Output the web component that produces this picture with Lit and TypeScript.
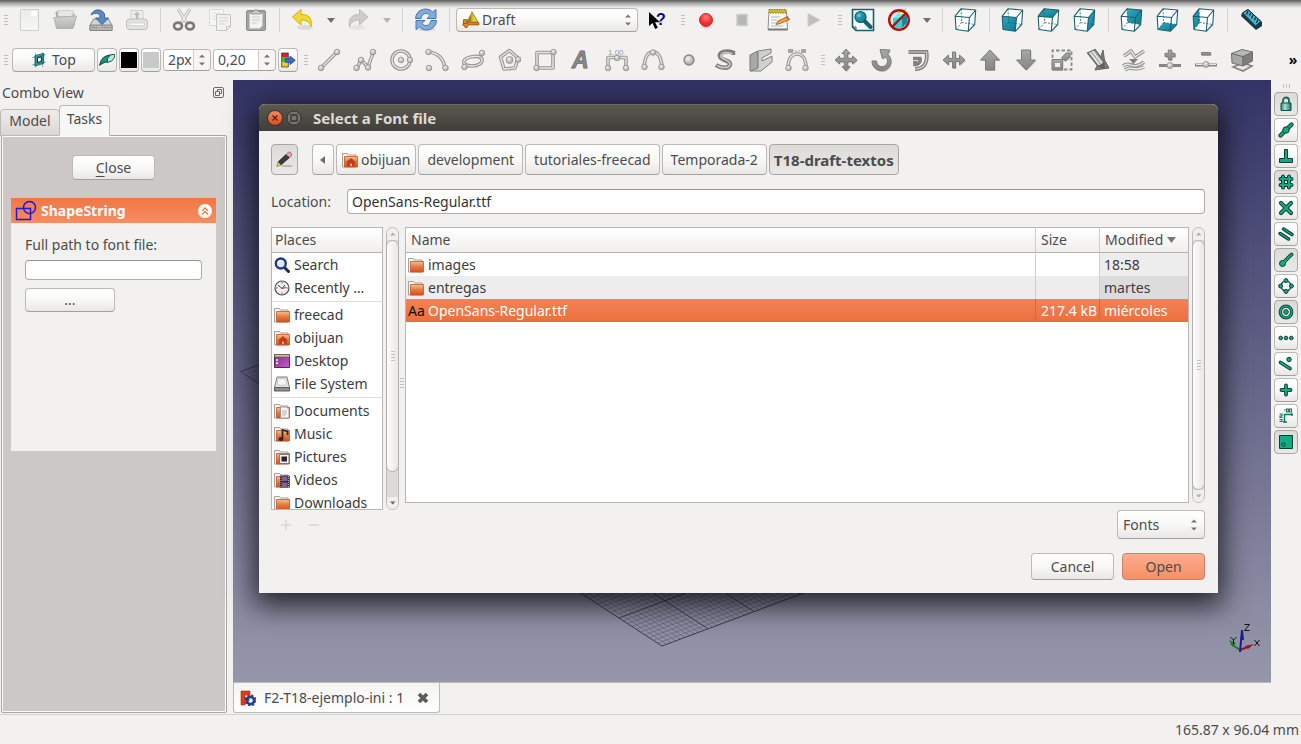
import { LitElement, html, svg, css, nothing, TemplateResult } from "lit";
import { customElement, state } from "lit/decorators.js";
import { classMap } from "lit/directives/class-map.js";

type Art = TemplateResult;

const icon = (art: Art, size = 24, box = 24) =>
  html`<svg class="icon" width=${size} height=${size} viewBox="0 0 ${box} ${box}" aria-hidden="true">${art}</svg>`;

/* Disabled drawing tools: a grey outline with a light core, and small spheres on the nodes. */
const tube = (d: string) => svg`
  <path d=${d} fill="none" stroke="#959593" stroke-width="3.6" stroke-linejoin="round"/>
  <path d=${d} fill="none" stroke="#e6e6e4" stroke-width="1.4" stroke-linejoin="round"/>`;
const ball = (x: number, y: number, r = 2.8) =>
  svg`<circle cx=${x} cy=${y} r=${r} fill="url(#ball)" stroke="#8f8f8d" stroke-width=".8"/>`;
const solid = (d: string) => svg`
  <path d=${d} transform="translate(1 1)" fill="#c4c4c2"/>
  <path d=${d} fill="url(#steel)" stroke="#7c7c7a" stroke-width="1" stroke-linejoin="round"/>`;

const FACES: Record<string, string> = {
  none: "",
  front: "M1.2 8.2 15.5 9.5 14.2 23.3 2 21.5Z",
  top: "M7 .8 21.7 2 15.5 9.5 1.2 8.2Z",
  right: "M21.7 2 15.5 9.5 14.2 23.3 20.7 16.5Z",
  rear: "M7 .8 21.7 2 20.7 16.5 7.7 14.5Z",
  bottom: "M2 21.5 14.2 23.3 20.7 16.5 7.7 14.5Z",
  left: "M7 .8 1.2 8.2 2 21.5 7.7 14.5Z",
};
const cube = (face: string) => svg`
  <path d="M1.2 8.2 7 .8 21.7 2 20.7 16.5 14.2 23.3 2 21.5Z" fill="#fdfefe"/>
  <path d=${FACES[face]} fill="url(#teal)"/>
  <path d="M1.2 8.2 15.5 9.5 14.2 23.3 2 21.5ZM1.2 8.2 7 .8 21.7 2 15.5 9.5M21.7 2 20.7 16.5 14.2 23.3" fill="none" stroke="#1f5f6c" stroke-width="1.1" stroke-linejoin="round"/>
  <path d="M7 .8 7.7 14.5 20.7 16.5M7.7 14.5 2 21.5" fill="none" stroke="#1f5f6c" stroke-width=".8" stroke-dasharray="2 1.4"/>`;

const ART: Record<string, Art> = {
  new: svg`<path d="M3.5 1.5h18v21h-18z" fill="url(#paper)" stroke="#cfcfcd"/><circle cx="17" cy="5.500" r="3" fill="#fff"/>`,
  open: svg`<path d="M3 4h8l2 2h8v12H5z" fill="#b9b9b7" stroke="#a3a3a1"/><path d="M5 2.500h15v6H5z" fill="#e6e6e4" stroke="#bcbcba" stroke-width=".6"/><path d="M.8 9.500 23.500 8 20 20.500H3.500z" fill="url(#folderGrey)" stroke="#a9a9a7" stroke-width=".8"/>`,
  save: svg`<path d="M4.500 11h15l3.500 6v5.500H1V17z" fill="#d3d4d2" stroke="#8f908e"/><path d="M1 17h22v5.500H1z" fill="#b3b5b2" stroke="#7d7f7c" stroke-width=".8"/><path d="M3 19.500h6M13 19.500h8" stroke="#7a7c79" stroke-dasharray="1 1"/><path d="M2 7C4 .5 13 .2 15.500 6v4h4L13 16.500 6.500 10h4.300V7.500C9 4.500 6 4.500 2 7z" fill="#5a8ac0" stroke="#356aa5"/>`,
  print: svg`<path d="M6 2.500h12V12H6z" fill="#eeeeec" stroke="#cfcfcd"/><path d="M12 3.500 15.500 7H13.200v4h-2.400V7H8.500z" fill="#bcbcba"/><rect x="1.500" y="11" width="21" height="10.500" rx="3" fill="#e2e2e0" stroke="#bcbcba"/><path d="M4.500 15h15v2.500h-15z" fill="#fbfbfb" stroke="#c6c6c4" stroke-width=".6"/>`,
  cut: svg`<path d="M6 1 15.500 16M18 1 8.500 16" stroke="#a9a9a7" stroke-width="3"/><path d="M6 1 15 15M18 1 9 15" stroke="#efefed" stroke-width="1.4"/><ellipse cx="6" cy="18" rx="4" ry="3.400" fill="none" stroke="#7b7b79" stroke-width="2.600"/><ellipse cx="18" cy="18" rx="4" ry="3.400" fill="none" stroke="#7b7b79" stroke-width="2.600"/>`,
  copy: svg`<path d="M1.500 1.500h14v16h-14z" fill="#f6f6f5" stroke="#d8d8d6"/><path d="M4 5h9M4 8h5M4 11h4" stroke="#dededc"/><path d="M8.500 6.500h14v12l-4 4h-10z" fill="#f1f1ef" stroke="#c4c4c2"/><path d="M11 10h9M11 13h9M11 16h6" stroke="#d5d5d3"/><path d="M18.500 22.500v-4h4z" fill="#fff" stroke="#c4c4c2"/>`,
  paste: svg`<rect x="2.500" y="2.500" width="19" height="20" rx="1.500" fill="#a3a3a1" stroke="#8c8c8a"/><path d="M5.500 5.500h13v12l-3 3h-10z" fill="#f3f3f1" stroke="#c6c6c4"/><path d="M8 9h8M8 12h8M8 15h5" stroke="#c9c9c7"/><path d="M7 3.500h2.500q2.500-4 5 0H17V6H7z" fill="#c9c9c7" stroke="#8c8c8a" stroke-width=".8"/>`,
  undo: svg`<ellipse cx="14" cy="19.500" rx="8" ry="2.500" fill="#dcdcda"/><path d="M10 1.500v5c7-.3 11.500 3 10 12-1.500-5-5-6.500-10-6.500v5L1.500 9z" fill="#f3d936" stroke="#d7ad05" stroke-linejoin="round"/>`,
  redo: svg`<ellipse cx="10" cy="19.500" rx="8" ry="2.500" fill="#e4e4e2"/><path d="M12.500 1.500v5C5.500 6.200 1 10 2.500 19c1.500-5 4.500-7 10-7v5L21 9z" fill="#cdcdcb" stroke="#bcbcba" stroke-linejoin="round"/>`,
  refresh: svg`<ellipse cx="12" cy="21.500" rx="10" ry="1.800" fill="#dcdcda"/><path d="M1.500 10.500C2 .5 14-1.500 18.500 4L22 1.500v9H13l3-3c-3-3.500-8-2.500-9 3z" fill="#81abdb" stroke="#4577b4" stroke-linejoin="round"/><path d="M22.500 12.500c-.5 10-12.500 12-17 6.500L2 21.500v-9h9l-3 3c3 3.500 8 2.500 9-3z" fill="#81abdb" stroke="#4577b4" stroke-linejoin="round"/>`,
  draft: svg`<path d="M12 3v12H6z" fill="#a37a2a"/><path d="M13 1 21.500 15H13z" fill="#e8cf2b" stroke="#7d6a12"/><path d="M2 15.500h20.500v3H8l-1 3.500H4l-1-3H1z" fill="#e58a1d" stroke="#8a4a05"/><path d="M2 11.500h5v5H2z" fill="#e58a1d" stroke="#8a4a05"/>`,
  whats: svg`<path d="M4 4v14l3.500-3 2.700 6 2.600-1.200-2.700-5.600H15z" fill="#000"/><text x="11" y="17" font-family="Liberation Sans" font-weight="bold" font-size="16" fill="#0a0a80">?</text>`,
  record: svg`<ellipse cx="12" cy="19" rx="6" ry="1.500" fill="#dcdcda"/><circle cx="12" cy="12" r="6.500" fill="url(#rec)" stroke="#d92626"/>`,
  stop: svg`<path d="M7 6.500h10v11H7z" fill="#b6b6b4" stroke="#cdcdcb" stroke-width="1.600"/>`,
  macro: svg`<path d="M3 3.500h17.500l1 18H2z" fill="#f8f8f6" stroke="#8f8f8d"/><path d="M2 21.500h19.500" stroke="#777" stroke-width="2"/><path d="M3 1.500h17v3.500H3z" fill="#cdb434" stroke="#8f7a10" stroke-dasharray="1.500 1"/><path d="M5 9h9M5 12h6M5 15h5M5 18h12" stroke="#b7b7b5"/><path d="M10 16.500 12 13l9.500-4.500 2 3-9.500 4z" fill="#f0a63c" stroke="#8d5a12" stroke-width=".8"/><path d="m20 9.200 1.500-.7 2 3-1.500.6z" fill="#d95b4a"/>`,
  play: svg`<path d="M6 5.500 18 12 6 18.500z" fill="#bebebc" stroke="#cdcdcb"/>`,
  fit: svg`<path d="M1.500 1.500h21v21H5l-3.500-3.500z" fill="#f6fbfc" stroke="#1b5c69" stroke-width="1.600"/><path d="M1.500 19H5v3.500" fill="none" stroke="#1b5c69"/><path d="m13.500 13 6 6" stroke="#14606f" stroke-width="4" stroke-linecap="round"/><circle cx="9.500" cy="9" r="5.500" fill="url(#teal)" stroke="#115464" stroke-width="1.200"/><circle cx="8" cy="7.500" r="2" fill="#7fd0dd" opacity=".7"/>`,
  nodraw: svg`<path d="M6 10h9v10H6z" fill="#35d0d8"/><path d="m15 10 5-4v9l-5 5z" fill="#128b95"/><path d="m6 10 4-4h10l-5 4z" fill="#7fe8ec"/><path d="M10 6 19 1" stroke="#e9cd3a" stroke-width="1.500"/><circle cx="12" cy="12" r="9.800" fill="none" stroke="#b01212" stroke-width="2.400"/><path d="M19 5 5 19" stroke="#b01212" stroke-width="2.400"/>`,
  ruler: svg`<path d="m3 5 6-4 14 13v4l-6 4L2 8z" fill="#173b47"/><path d="M3.500 5 9 1.500 22 13.500 16.500 18z" fill="#4aaecb" stroke="#123"/><path d="m9 3-1.500 3.500M11.500 5 10.500 7.500M14 7l-1.500 3.500M16.500 9.500l-1 2.500M19 11.500 17.500 15" stroke="#0d2a33" stroke-width="1.200"/>`,

  plane: svg`<path d="M6 5.500 19 2v15L6 21z" fill="#3fb9c4" stroke="#0f5a63" stroke-width="1.300"/><path d="M9.500 9 15.500 7v7L9.500 16z" fill="#fff" stroke="#111" stroke-width="1.500"/><path d="M2 8.500 22 4M2 19.500 22 15M7 2v21M17.500 1v21" stroke="#10606a" stroke-width=".9"/>`,
  pen: svg`<path d="M1 19.500C2 13 7 7 14 5l5-.5L18 10l-5 5-5 .5z" fill="#15957a" stroke="#0b4f42" stroke-width="1.600"/><path d="m13 9 5-5 5-.5.500 4.500-5 6-6 1.500z" fill="#bfe6dc" stroke="#0b4f42" stroke-width="1.400"/>`,
  apply: svg`<path d="M2.500 1.500h10v7h-10z" fill="#e3202a"/><path d="M2.500 8.500h6v7h-6z" fill="#31c52c"/><path d="M2.500 15.500h10v7h-10z" fill="#e9cf22"/><path d="M2.500 1.500h10v21h-10z" fill="none" stroke="#222"/><path d="M8 9.500h7V6l8 6.500-8 6.500v-3.500H8z" fill="#356ad0" stroke="#123a85"/>`,

  line: svg`${tube("M4 20 20 4")}${ball(4, 20)}${ball(20, 4)}`,
  wire: svg`${tube("M4 20 8 12 15 19 20 5")}${ball(3.500, 20)}${ball(8, 12)}${ball(15, 19.500)}${ball(20, 4)}`,
  circle: svg`${tube("M21 12A9 9 0 1 1 3 12 9 9 0 0 1 21 12")}${ball(12, 12)}${ball(21, 12)}`,
  arc: svg`${tube("M4 4Q18 6 20 20")}${ball(3.500, 4)}${ball(20.500, 20)}${ball(4, 20)}`,
  ellipse: svg`${tube("M21 11C22 15 17 18 11 18S2 16 3 13 8 9 13 8.500 20 9 21 11")}${ball(3.500, 19)}${ball(21, 5)}`,
  polygon: svg`${tube("M12.500 2.500 21 10 18 20 7 21 3.500 9Z")}${ball(12.500, 12, 3.500)}${ball(21.200, 11.500)}`,
  rect: svg`${tube("M4 4.500H20V20H4Z")}${ball(3.500, 20)}${ball(20.500, 4)}`,
  text: svg`<text x="3" y="20" font-family="Liberation Sans" font-weight="bold" font-style="italic" font-size="23" fill="#8a8a88" stroke="#6f6f6d" stroke-width=".9">A</text>`,
  dim: svg`<text x="3" y="7" font-family="Liberation Sans" font-size="8" fill="#9a9a98">1.00</text>${tube("M3 20V9.500H21V20")}${ball(3, 20)}${ball(21, 20)}${ball(12, 10)}`,
  bspline: svg`${tube("M3 19C4 8 8 4 12 4S20 8 21 19")}${ball(3.500, 19)}${ball(12, 4.500)}${ball(20.500, 19)}`,
  point: svg`<circle cx="12" cy="12" r="5" fill="url(#ball)" stroke="#858583" stroke-width="1.300"/>`,
  shape: svg`<path d="M20 7V4.500C13 2 6 4 7 8.500S18 12 17 16.500 8 20.500 3 17" fill="none" stroke="#7c7c7a" stroke-width="4.400"/><path d="M19.500 6C13 3 7 5 8 8.500S18 12 17 16.500 8 20 4 17.500" fill="none" stroke="#c9c9c7" stroke-width="1.600"/>`,
  binder: svg`<path d="M1 7 9 3v18l-8 2z" fill="#a9a9a7" stroke="#777"/><path d="M9 3 22 1v4l-9 5v3l10-5v6l-11 9H2l7-3z" fill="#cfcfcd" stroke="#80807e"/>`,
  bezier: svg`${tube("M3 20C3 9 8 6 12 6S21 9 21 20")}<path d="M4 3H20" stroke="#a3a3a1" stroke-dasharray="2 1"/><path d="M3 1h5v4H3zM16 1h5v4h-5z" fill="#a5a5a3"/>${ball(3.500, 20)}${ball(20.500, 20)}`,

  move: svg`${solid("M12 1 16 5.500H13.700V10.300H18.500V8L23 12 18.500 16V13.700H13.700V18.500H16L12 23 8 18.500H10.300V13.700H5.500V16L1 12 5.500 8V10.300H10.300V5.500H8Z")}`,
  rotate: svg`${solid("M2 13A9.500 9.500 0 1 0 17.500 6L20 2 10 1.500 12.500 11 15 8.500A5.500 5.500 0 1 1 6.500 13Z")}`,
  offset: svg`<path d="M2.500 4H20.500C22 15 18 21 9 21" fill="none" stroke="#80807e" stroke-width="3.800"/><path d="M2.500 4H20.500C22 15 18 21 9 21" fill="none" stroke="#cfcfcd" stroke-width="1.200"/><path d="M7 10.500H14C15 14 12 16.500 9 16.500V13" fill="none" stroke="#80807e" stroke-width="3.600"/>`,
  trim: svg`${solid("M1 12 6.500 7V10.500H10.500V4H13.500V10.500H17.500V7L23 12 17.500 17V13.500H13.500V20H10.500V13.500H6.500V17Z")}`,
  up: svg`${solid("M12 2 21.500 12H16.500V22H7.500V12H2.500Z")}`,
  down: svg`${solid("M12 22 21.500 12H16.500V2H7.500V12H2.500Z")}`,
  scale: svg`<path d="M2.500 10V2.500H21.500V21.500H14" fill="none" stroke="#8a8a88" stroke-width="1.800" stroke-dasharray="3.500 2"/>${solid("M2 11.500H12.500V22H2Z")}<path d="M5 15h5v4H5z" fill="#eee"/>${solid("M11.500 10 16 5H20V9L15 13Z")}`,
  edit: svg`<path d="M17 2 18.500 12 23 20 9 22 13 14z" fill="#7d7d7b" stroke="#636361"/><path d="M1.500 5 9 1.500 18 13.500V20L11 17z" fill="#a6a6a4" stroke="#666664" stroke-width="1.300"/><path d="m4 4.500 9.500 12.500M6.500 3 16 15.500" stroke="#eeeeec" stroke-width="1.300"/><path d="m12 18.500 6-4.500.5 7z" fill="#5f5f5d"/>`,
  wire2: svg`${tube("M2 8 9 3 13 9 22 3")}${tube("M1 18C7 12 11 23 22 14M3 22C9 17 12 24 22 19")}<path d="M7 11h9l-4.500 5z" fill="#80807e"/>`,
  addpt: svg`${solid("M10.300 2H13.700V5.300H17V8.700H13.700V12H10.300V8.700H7V5.300H10.300Z")}<path d="M1 17.500H23" stroke="#858583" stroke-width="3"/>${ball(12, 17.500, 3)}`,
  delpt: svg`${solid("M7.500 4.500H16.500V7H7.500Z")}<path d="M1 17H23" stroke="#858583" stroke-width="3"/><path d="M2 16.500H22" stroke="#e8e8e6"/>${ball(12, 16.500, 3)}`,
  view2d: svg`<path d="M3 19 13 15l9 3-9 5z" fill="#e6e6e4" stroke="#858583" stroke-width="1.600"/><path d="M1.500 5.500 13 8.500V18L2 15z" fill="#a8a8a6" stroke="#6e6e6c"/><path d="M13 8.500 22.500 4v9L13 18z" fill="#7e7e7c" stroke="#6e6e6c"/><path d="M1.500 5.500 12 1.500 22.500 4 13 8.500z" fill="#b9b9b7" stroke="#6e6e6c"/>`,

  iso: cube("none"), front: cube("front"), top: cube("top"), right: cube("right"),
  rear: cube("rear"), bottom: cube("bottom"), left: cube("left"),
};

/* Snap tools, 16 x 16: green shapes with a dark outline. */
const snapStroke = (d: string, w = 2.200) => svg`
  <path d=${d} fill="none" stroke="#0d3f38" stroke-width=${w + 2} stroke-linecap="round"/>
  <path d=${d} fill="none" stroke="#14ab83" stroke-width=${w} stroke-linecap="round"/>`;
const dot = (x: number, y: number, r: number) =>
  svg`<circle cx=${x} cy=${y} r=${r} fill="#14ab83" stroke="#0d3f38"/>`;

const SNAPS: { name: string; on?: boolean; art: Art }[] = [
  { name: "Toggle snap", on: true, art: svg`<path d="M5 7V4.500a3 3 0 0 1 6 0V7" fill="none" stroke="#14695b" stroke-width="1.800"/><path d="M3 7h10v7.500H3z" fill="url(#lock)" stroke="#0d5247"/>` },
  { name: "Midpoint", art: svg`${snapStroke("M2.500 13.500 13.500 2.500")}${dot(8, 8, 3.200)}<path d="m6 10 4-4" stroke="#14ab83" stroke-width="2"/>` },
  { name: "Perpendicular", art: svg`<path d="M6.500 1.500h3v9h5v4h-13v-4h5z" fill="#14ab83" stroke="#0d3f38"/>` },
  { name: "Grid", on: true, art: svg`${snapStroke("M5 2.500V13.500M11 2.500V13.500M2.500 5H13.500M2.500 11H13.500", 2)}` },
  { name: "Intersection", art: svg`${snapStroke("M3 3 13 13M13 3 3 13")}` },
  { name: "Parallel", art: svg`${snapStroke("M5.500 3 14 8.500M2 7.500 10.500 13", 1.400)}` },
  { name: "Endpoint", on: true, art: svg`${snapStroke("M5 11 13.500 2.500", 1.800)}${dot(4.500, 11.500, 3)}<path d="m5 11 3-3" stroke="#14ab83" stroke-width="1.800"/>` },
  { name: "Angle", art: svg`<circle cx="8" cy="8" r="5" fill="none" stroke="#0d3f38" stroke-width="1.200"/>${dot(8, 2.600, 2)}${dot(8, 13.400, 2)}${dot(2.600, 8, 2)}${dot(13.400, 8, 2)}` },
  { name: "Center", on: true, art: svg`<circle cx="8" cy="8" r="5.800" fill="none" stroke="#0d3f38" stroke-width="3.200"/><circle cx="8" cy="8" r="5.800" fill="none" stroke="#14ab83" stroke-width="1.400"/>${dot(8, 8, 2.300)}` },
  { name: "Extension", art: svg`${dot(2.700, 8, 1.800)}${dot(8, 8, 1.800)}${dot(13.300, 8, 1.800)}` },
  { name: "Near", art: svg`${snapStroke("M2.500 6.500 12 12.500", 1.600)}${dot(11, 3.500, 2.200)}` },
  { name: "Ortho", art: svg`${snapStroke("M8 3.500V12.500M3.500 8H12.500", 1.800)}` },
  { name: "Dimensions", art: svg`<path d="M6.500 14V6.500H14M6.500 6.500v2M14 5v3M5 14h4" fill="none" stroke="#15705f" stroke-width="1.400"/><path d="M6 2h1.500M8.500 1v3h1.800V1zM11.500 1v3h2V1zM1.500 6h2.500v2H2v1.500h2.500M1.500 11.500H4v2H1.500" fill="none" stroke="#15705f" stroke-width="1.100"/>` },
  { name: "Working plane", on: true, art: svg`<path d="M1.500 1.500h13v13h-13z" fill="#14ab83" stroke="#0d3f38"/><circle cx="5.500" cy="10.500" r="1.700" fill="none" stroke="#0d3f38"/>` },
];

const folder = (over: Art | typeof nothing = nothing) => svg`
  <path d="M.5 15V1.500h5l1 1.500h7.500V15z" fill="#f4f3f1" stroke="#a5a19b"/>
  <path d="M2.500 4.500h13v10.500H2.500z" fill="url(#orange)" stroke="#c4532a" stroke-width=".8"/>${over}`;

const PLACE_ART: Record<string, Art> = {
  folder: folder(),
  home: folder(svg`<path d="m9 6 5 4.500h-1.200V14H5.200v-3.500H4z" fill="#c23b17"/><path d="M8 11.500h2V14H8z" fill="#f3b58e"/>`),
  search: svg`<path d="m11 11 3.500 3.500" stroke="#2c2c34" stroke-width="3" stroke-linecap="round"/><circle cx="6.800" cy="6.500" r="5" fill="#dbe9f9" stroke="#23397f" stroke-width="2.400"/><path d="M4 6a3 3 0 0 1 3-2.500" stroke="#fff" stroke-width="1.200" fill="none"/>`,
  recent: svg`<circle cx="8" cy="8" r="7" fill="#f1f1ef" stroke="#4d4d4b" stroke-width="1.200"/><path d="M8 8.500 4 5M8 8.500 11 5" stroke="#444"/><path d="m8 8.500 4-1" stroke="#d02020"/><path d="M8 2v1.500M8 12.500V14M2 8h1.500M12.500 8H14" stroke="#666"/>`,
  desktop: svg`<path d="M.5 1.500h15v13H.5z" fill="url(#purple)" stroke="#4f2a52"/><path d="M.5 1.500h15v2.500H.5z" fill="#c8c39e" stroke="#66614b" stroke-width=".7"/><path d="M2 6h2v2H2zM2 9h2v2H2z" fill="#e8c6ea"/>`,
  disk: svg`<path d="m3 1 10 0 2.500 10.500H.5z" fill="#e3e3e1" stroke="#7b7b79"/><ellipse cx="8" cy="6" rx="4.500" ry="3.500" fill="#f6f6f4" stroke="#b3b3b1" stroke-width=".7"/><path d="M.5 11.500h15v3.500H.5z" fill="#8f8f8d" stroke="#5c5c5a"/>`,
  docs: folder(svg`<path d="M6.500 4h6l2.500 2.500V15H6.500z" fill="#f6f5f2" stroke="#8f8b85" stroke-width=".8"/><path d="M8 8h5M8 10h5M8 12h4" stroke="#a8a49e" stroke-width=".8"/>`),
  music: folder(svg`<path d="M8.500 12.500V4l5 1.500V9" fill="none" stroke="#2e2c2a" stroke-width="1.800"/><ellipse cx="7" cy="13" rx="2.500" ry="2" fill="#2e2c2a"/>`),
  pics: folder(svg`<path d="M5.500 5.500h9.500v9H5.500z" fill="#f2f1ef" stroke="#6b6762" stroke-width=".8"/><path d="M7.500 7.500h5.500v5H7.500z" fill="#2b2038"/>`),
  video: folder(svg`<path d="M6 3.500h9.500v12H6z" fill="#2c2a2a"/><path d="M8 4.500h5.500v4.500H8zM8 10.500h5.500v4.500H8z" fill="#8a5c98"/><path d="M7 4v11M14.500 4v11" stroke="#d5d2cc" stroke-width=".8" stroke-dasharray="1 1"/>`),
};

const PLACES: [string, string][][] = [
  [["search", "Search"], ["recent", "Recently …"]],
  [["folder", "freecad"], ["home", "obijuan"], ["desktop", "Desktop"], ["disk", "File System"]],
  [["docs", "Documents"], ["music", "Music"], ["pics", "Pictures"], ["video", "Videos"], ["folder", "Downloads"]],
];

const FILES = [
  { name: "images", size: "", modified: "18:58" },
  { name: "entregas", size: "", modified: "martes" },
  { name: "OpenSans-Regular.ttf", size: "217.4 kB", modified: "miércoles" },
];

const CRUMBS = ["obijuan", "development", "tutoriales-freecad", "Temporada-2", "T18-draft-textos"];

@customElement("app-root")
export class AppRoot extends LitElement {
  @state() private selected = 2;
  @state() private location = "OpenSans-Regular.ttf";

  static styles = css`
    :host {
      display: flex; flex-direction: column; height: 100vh; overflow: hidden; position: relative;
      background: #f2f1f0; color: #4c4c4c;
      font: 14px/20px "Noto Sans", "Open Sans", sans-serif;
    }
    * { box-sizing: border-box; }
    button, input, select { font: inherit; color: inherit; margin: 0; padding: 0; }
    button { display: inline-flex; align-items: center; justify-content: center; border: 0; background: none; white-space: nowrap; }
    .icon { display: block; flex: none; }
    .defs { position: absolute; }
    .fade { position: absolute; inset: 0 0 auto; height: 8px; background: linear-gradient(#5e5e5e, #b4b4b3 50%, rgba(242, 241, 240, 0)); pointer-events: none; }

    .bar { display: flex; align-items: center; height: 40px; gap: 2px; }
    .group { display: flex; align-items: center; }
    .grip { width: 11px; display: flex; flex-direction: column; align-items: center; gap: 2px; }
    .grip i { width: 4px; height: 1px; background: #c3c0bc; }
    .grip.flat { flex-direction: row; width: auto; height: 8px; justify-content: center; }
    .grip.flat i { width: 1px; height: 4px; }
    .tool { width: 36px; height: 32px; }
    .drop { width: 20px; height: 32px; }
    .sep { width: 11px; height: 24px; display: flex; justify-content: center; }
    .sep::before { content: ""; width: 1px; background: #d6d3d0; }

    .raised { border: 1px solid #bdb9b4; border-bottom-color: #a39f99; border-radius: 4px; background: linear-gradient(#fff, #f8f8f7 50%, #e9e8e6); }
    .pressed { background: linear-gradient(#dddbd8, #e9e8e6); border-color: #aaa6a1; }
    .settings { gap: 2px; padding-left: 1px; }
    .plane { width: 83px; height: 24px; gap: 5px; }
    .small { width: 20px; height: 24px; }
    .swatch { width: 16px; height: 16px; background: #c8c9ca; }
    .swatch.black { background: #000; }
    .spin { display: flex; height: 22px; width: 48px; overflow: hidden; background: #f6f5f4; }
    .spin.wide { width: 63px; }
    .spin input { flex: 1; min-width: 0; border: 0; border-right: 1px solid #cfccc8; background: #fff; padding-left: 4px; outline: 0; }
    .steps { width: 16px; flex: none; display: flex; align-items: center; justify-content: center; }
    .more { margin-left: auto; width: 16px; font-weight: bold; color: #000; }
    .combo { display: flex; align-items: center; }
    .combo select { appearance: none; border: 0; background: none; flex: 1; min-width: 0; outline: 0; height: 100%; }
    .bench { width: 182px; height: 24px; margin: 0 1px; padding: 0 5px; gap: 2px; }

    .main { flex: 1; min-height: 0; display: flex; }
    .dock { width: 233px; flex: none; display: flex; flex-direction: column; padding-right: 6px; }
    .docktitle { display: flex; align-items: center; justify-content: space-between; height: 25px; padding: 0 3px 0 2px; }
    .tabs { display: flex; align-items: flex-end; height: 31px; margin-bottom: -1px; z-index: 1; }
    .tab { height: 27px; width: 60px; border: 1px solid #bdb9b4; border-radius: 4px 4px 0 0; background: linear-gradient(#eeedeb, #dad8d5); margin-right: -1px; padding-bottom: 3px; }
    .tab.open { height: 31px; width: 51px; background: #f7f7f6; border-bottom-color: #f7f7f6; }
    .panel { flex: 1; background: #cbc8c5; border: 1px solid #aaa6a1; outline: 1px solid #fafafa; outline-offset: -2px; margin: 0 0 1px 1px; border-radius: 2px; padding: 19px 10px 0 9px; display: flex; flex-direction: column; }
    .close { align-self: center; width: 83px; height: 25px; }
    .close u { text-underline-offset: 3px; }
    .task { margin-top: 18px; background: #f2f1f0; }
    .taskhead { display: flex; align-items: center; gap: 4px; height: 25px; padding: 0 4px; color: #fff; font-weight: bold; background: linear-gradient(#f07746, #f68d61); }
    .taskhead h2 { font: inherit; margin: 0; flex: 1; }
    .taskbody { display: flex; flex-direction: column; align-items: flex-start; padding: 12px 14px 139px; }
    .taskbody input { width: 100%; height: 20px; margin: 5px 0 8px; }
    .field { border: 1px solid #b0aca6; border-top-color: #97938d; border-radius: 4px; background: #fff; outline: 0; }
    .browse { width: 90px; height: 24px; }

    .center { flex: 1; min-width: 0; display: flex; flex-direction: column; }
    .view { flex: 1; min-height: 0; position: relative; background: linear-gradient(#333366, #9797ab); }
    .scene { position: absolute; inset: 0; width: 100%; height: 100%; }
    .axes { position: absolute; right: 5px; bottom: 24px; }
    .docs { height: 32px; flex: none; border-top: 1px solid #bdb9b4; display: flex; padding-bottom: 1px; }
    .doc { display: flex; align-items: center; gap: 8px; width: 207px; padding: 0 6px; border: 1px solid #bdb9b4; border-top: 0; border-radius: 0 0 3px 3px; background: linear-gradient(#f4f4f3, #fff); white-space: nowrap; }
    .doc span { flex: 1; }
    .doc button { width: 22px; }
    .status { height: 30px; flex: none; border-top: 1px solid #d5d2cf; display: flex; align-items: center; justify-content: flex-end; padding-right: 2px; }

    .snaps { width: 30px; flex: none; display: flex; flex-direction: column; align-items: center; gap: 2px; padding-top: 2px; }
    .snap { width: 24px; height: 24px; }

    .dialog { position: absolute; inset: 24px 53px 89px 26px; display: flex; flex-direction: column; background: #f2f1f0; border-radius: 6px 6px 0 0; box-shadow: 0 8px 28px 4px rgba(0, 0, 0, .75); }
    .titlebar { height: 27px; flex: none; display: flex; align-items: center; gap: 3px; padding: 0 8px; border-radius: 6px 6px 0 0; background: linear-gradient(#5b5850, #3f3e39); border-top: 1px solid #6f6c64; color: #dfdbd2; font-weight: bold; font-size: 15px; }
    .titlebar h1 { font: inherit; margin: 0 0 0 8px; }
    .body { flex: 1; min-height: 0; display: flex; flex-direction: column; padding: 13px 13px 13px 12px; }
    .crumbs { display: flex; gap: 2px; margin-bottom: 14px; flex: none; }
    .crumbs button { height: 31px; padding: 0 8px; }
    .crumbs .toggle { width: 27px; padding: 0; margin-right: 12px; }
    .crumbs .back { width: 22px; padding: 0; }
    .crumbs .home { padding: 0 5px; gap: 3px; }
    .crumbs .here { font-weight: bold; font-size: 15px; padding: 0 4px; }
    .loc { display: flex; align-items: center; margin-bottom: 13px; flex: none; }
    .loc label { width: 76px; }
    .loc input { flex: 1; height: 25px; padding: 0 4px; color: #333; }
    .lists { flex: 1; min-height: 0; display: flex; }
    .left { display: flex; flex-direction: column; width: 112px; margin-right: 3px; }
    .places { flex: 1; min-height: 0; overflow: hidden; border: 1px solid #bab6b1; background: #fff; }
    .head { height: 25px; padding: 0 3px; border-bottom: 1px solid #b5b1ac; background: linear-gradient(#fff, #f0efee); display: flex; align-items: center; }
    .places ul { list-style: none; margin: 0; padding: 0; }
    .places ul + ul { border-top: 1px solid #dedcda; margin-top: 2px; padding-top: 1px; }
    .places li { display: flex; }
    .places li button { flex: 1; height: 23px; justify-content: flex-start; gap: 4px; padding-left: 2px; color: #3c3c3c; }
    .pm { height: 29px; flex: none; display: flex; gap: 16px; align-items: center; padding-left: 9px; }
    .pm button { width: 12px; height: 12px; }
    .scroll { width: 13px; flex: none; display: flex; flex-direction: column; border: 1px solid #bebab5; border-radius: 7px; background: #dddbd8; }
    .scroll > svg { flex: none; background: #f0efee; }
    .scroll > svg:first-child { border-radius: 6px 6px 0 0; }
    .scroll > svg:last-child { border-radius: 0 0 6px 6px; }
    .thumb { flex: 1; margin: 0 -1px; border: 1px solid #b3afaa; border-radius: 7px; background: linear-gradient(90deg, #fcfcfc, #e9e8e6); display: flex; align-items: center; justify-content: center; }
    .leftscroll { margin-bottom: 29px; }
    .leftscroll .thumb { margin-bottom: 25px; }
    .split { width: 6px; flex: none; display: flex; align-items: center; justify-content: center; }
    .rightcol { flex: 1; min-width: 0; display: flex; flex-direction: column; }
    .files { flex: 1; min-height: 0; display: flex; gap: 3px; }
    .sheet { flex: 1; min-width: 0; border: 1px solid #bab6b1; background: #fff; }
    table { width: 100%; border-collapse: separate; border-spacing: 0; table-layout: fixed; }
    .csize { width: 64px; }
    .cmod { width: 89px; }
    th { height: 25px; padding: 0 5px; font-weight: normal; text-align: left; background: linear-gradient(#fff, #f0efee); border-bottom: 1px solid #b5b1ac; white-space: nowrap; }
    td { height: 23px; padding: 0 4px; color: #3c3c3c; white-space: nowrap; }
    th + th, td + td { border-left: 1px solid #d0cdca; }
    td:first-child { padding-left: 2px; }
    td:last-child { background: #ededed; }
    tr.alt td { background: #ededed; }
    tr.alt td:last-child { background: #dcdcdc; }
    tr.sel td, tr.sel td:last-child { background: linear-gradient(#f48254, #ea6f3e); color: #fff; border-color: #d8683c; }
    .size { padding: 0 2px; text-align: right; }
    .cell, .sort { display: flex; align-items: center; gap: 4px; }
    .aa { width: 16px; color: #111; }
    .filter { align-self: flex-end; width: 88px; height: 29px; margin-top: 7px; padding: 0 6px 0 5px; }
    .actions { display: flex; justify-content: flex-end; gap: 8px; margin-top: 14px; flex: none; }
    .actions button { width: 83px; height: 27px; }
    .primary { background: linear-gradient(#fdae90, #f68e66); border-color: #c98468; }
  `;

  private defs() {
    return html`<svg class="defs" width="0" height="0" aria-hidden="true"><defs>
      <radialGradient id="ball" cx=".4" cy=".35"><stop offset="0" stop-color="#f4f4f2"/><stop offset="1" stop-color="#b4b4b2"/></radialGradient>
      <linearGradient id="steel" x2="0" y2="1"><stop offset="0" stop-color="#a8a8a6"/><stop offset="1" stop-color="#858583"/></linearGradient>
      <linearGradient id="teal" x2="1" y2="1"><stop offset="0" stop-color="#2fa9bf"/><stop offset="1" stop-color="#0c7a92"/></linearGradient>
      <linearGradient id="paper" x2="0" y2="1"><stop offset="0" stop-color="#ebebe9"/><stop offset="1" stop-color="#f6f6f5"/></linearGradient>
      <linearGradient id="folderGrey" x2="0" y2="1"><stop offset="0" stop-color="#d3d3d1"/><stop offset="1" stop-color="#b4b4b2"/></linearGradient>
      <radialGradient id="rec" cx=".5" cy=".3"><stop offset="0" stop-color="#fb7a7a"/><stop offset="1" stop-color="#ec2b2b"/></radialGradient>
      <linearGradient id="lock"><stop offset="0" stop-color="#1c8f79"/><stop offset=".4" stop-color="#a9dfd3"/><stop offset="1" stop-color="#147a66"/></linearGradient>
      <linearGradient id="orange" x2="0" y2="1"><stop offset="0" stop-color="#f6c090"/><stop offset=".5" stop-color="#e8793f"/><stop offset="1" stop-color="#d4521f"/></linearGradient>
      <linearGradient id="purple" x2="1" y2="1"><stop offset="0" stop-color="#7c2f86"/><stop offset="1" stop-color="#c45ecb"/></linearGradient>
      <linearGradient id="redball" x2="0" y2="1"><stop offset="0" stop-color="#f58a68"/><stop offset="1" stop-color="#df4a1c"/></linearGradient>
    </defs></svg>`;
  }

  private grip(flat = false) {
    return html`<span class=${classMap({ grip: true, flat })}><i></i><i></i><i></i>${flat ? nothing : html`<i></i>`}</span>`;
  }
  private tools(...names: string[]) {
    return names.map((n) => {
      if (n === "|") return html`<span class="sep"></span>`;
      if (n === "v" || n === "w")
        return html`<button class="drop" aria-label="History">${icon(svg`<path d="M0 2h8L4 7z" fill=${n === "v" ? "#6f6f6d" : "#b5b5b3"}/>`, 8, 8)}</button>`;
      return html`<button class="tool" aria-label=${n}>${icon(ART[n])}</button>`;
    });
  }
  private arrows() {
    return html`<svg class="icon" width="8" height="14" viewBox="0 0 8 14" aria-hidden="true"><path d="M1 4.500h6L4 1.500zM1 9.500h6l-3 3z" fill="#777573"/></svg>`;
  }
  private scrollArrow(up: boolean, strong = false) {
    return html`<svg width="11" height="12" viewBox="0 0 11 12" aria-hidden="true"><path d=${up ? "M3 7.500h5.500L5.700 4.500z" : "M3 4.500h5.500L5.700 7.500z"} fill=${strong ? "#6b6967" : "#b0adaa"}/></svg>`;
  }

  private toolbars() {
    return html`<header>
      <div class="bar">
        <div class="group">${this.grip()}${this.tools("new", "open", "save", "print", "|", "cut", "copy", "paste", "|", "undo", "v", "redo", "w", "|", "refresh", "|")}
          <span class="combo raised bench">${icon(ART.draft, 18)}
            <select aria-label="Workbench"><option>Draft</option></select>${this.arrows()}</span>
          ${this.tools("whats")}</div>
        <div class="group">${this.grip()}${this.tools("record", "stop", "macro", "play")}</div>
        <div class="group">${this.grip()}${this.tools("fit", "nodraw", "v", "|", "iso", "|", "front", "top", "right", "|", "rear", "bottom", "left", "|", "ruler")}</div>
      </div>
      <div class="bar">
        <div class="group">${this.grip()}
          <div class="group settings">
            <button class="raised plane">${icon(ART.plane, 16)}Top</button>
            <button class="raised small" aria-label="Construction mode">${icon(ART.pen, 16)}</button>
            <button class="raised small" aria-label="Line colour"><span class="swatch black"></span></button>
            <button class="raised small" aria-label="Face colour"><span class="swatch"></span></button>
            <span class="raised spin"><input aria-label="Line width" value="2px"><span class="steps">${this.arrows()}</span></span>
            <span class="raised spin wide"><input aria-label="Text size" value="0,20"><span class="steps">${this.arrows()}</span></span>
            <button class="raised small" aria-label="Apply style">${icon(ART.apply, 16)}</button>
          </div></div>
        <div class="group">${this.grip()}${this.tools("line", "wire", "circle", "arc", "ellipse", "polygon", "rect", "text", "dim", "bspline", "point", "shape", "binder", "bezier")}</div>
        <div class="group">${this.grip()}${this.tools("move", "rotate", "offset", "trim", "up", "down", "scale", "edit", "wire2", "addpt", "delpt", "view2d")}</div>
        <button class="more" aria-label="More tools">»</button>
      </div>
    </header>`;
  }

  private dock() {
    return html`<aside class="dock">
      <div class="docktitle"><span>Combo View</span>
        <button aria-label="Float panel">${icon(svg`<rect x=".5" y=".5" width="10" height="10" rx="1.500" fill="none" stroke="#6a6a68"/><path d="M2.500 4.500h4v4h-4zM4.500 4V2.500h4v4H7" fill="none" stroke="#6a6a68"/>`, 11, 11)}</button></div>
      <div class="tabs" role="tablist">
        <button class="tab" role="tab" aria-selected="false">Model</button>
        <button class="tab open" role="tab" aria-selected="true">Tasks</button>
      </div>
      <div class="panel">
        <button class="raised close"><span><u>C</u>lose</span></button>
        <section class="task">
          <div class="taskhead">
            ${icon(svg`<path d="M1.500 8.500h14v11h-14z" fill="none" stroke="#1a1ae0" stroke-width="1.500"/><circle cx="14.500" cy="7.500" r="6" fill="none" stroke="#1a1ae0" stroke-width="1.500"/>`, 22, 22)}
            <h2>ShapeString</h2>
            <button aria-label="Collapse">${icon(svg`<circle cx="7" cy="7" r="7" fill="#fff"/><path d="M4 7l3-3 3 3M4 10.500l3-3 3 3" fill="none" stroke="#f07746" stroke-width="1.300"/>`, 14, 14)}</button>
          </div>
          <div class="taskbody">
            <label for="fontpath">Full path to font file:</label>
            <input id="fontpath" class="field">
            <button class="raised browse">...</button>
          </div>
        </section>
      </div>
    </aside>`;
  }

  private scene() {
    /* Ground grid: the near corner, and the steps along its right and left edges. */
    const [x0, y0] = [429, 566];
    const right = { n: 80, dx: 4.6, dy: -1.72 };
    const left = { n: 98, dx: -4.3, dy: -2.8 };
    const line = (x: number, y: number, dx: number, dy: number, strong: boolean) =>
      svg`<path d="M${x} ${y}l${dx} ${dy}" stroke=${strong ? "#3a3a50" : "#55556c"} stroke-width=${strong ? 1 : 0.5}/>`;
    const lines = [];
    for (let i = 0; i <= right.n; i++)
      lines.push(line(x0 + i * right.dx, y0 + i * right.dy, left.n * left.dx, left.n * left.dy, i % 10 === 0));
    for (let i = 0; i <= left.n; i++)
      lines.push(line(x0 + i * left.dx, y0 + i * left.dy, right.n * right.dx, right.n * right.dy, i % 10 === 0 || i === left.n));
    return html`<svg class="scene" aria-hidden="true">${lines}</svg>
      <svg class="axes" width="40" height="36" viewBox="0 0 40 36" role="img" aria-label="Axes">
        <path d="M14 28 24 24" stroke="#8d1c24" stroke-width="2"/><path d="m19 24 9-2-6 5z" fill="#8d1c24"/>
        <path d="M14 28 5 22" stroke="#1e7a26" stroke-width="2"/><path d="m3 18 7 3-3 4z" fill="#1e7a26"/>
        <path d="M14 30 16 8" stroke="#1c1c8c" stroke-width="2"/><path d="m17 8-3 10h4z" fill="#1c1c8c"/>
        <path d="M18.500 2.500h5l-5 6h5M28.500 18l5 6M33.500 18l-5 6M4.500 15l3 3 3-3M7.500 18v4" fill="none" stroke="#111"/>
      </svg>`;
  }

  private dialog() {
    return html`<section class="dialog" role="dialog" aria-labelledby="dlg-title">
      <div class="titlebar">
        <button aria-label="Close window">${icon(svg`<circle cx="8" cy="8" r="7.500" fill="url(#redball)" stroke="#33312c"/><path d="m5.500 5.500 5 5m0-5-5 5" stroke="#4b2213" stroke-width="1.200"/>`, 16, 16)}</button>
        <button aria-label="Maximize">${icon(svg`<circle cx="8" cy="8" r="7" fill="#77746b" stroke="#33312c"/><path d="M5 5h6v6H5z" fill="none" stroke="#35342f" stroke-width="1.300"/>`, 16, 16)}</button>
        <h1 id="dlg-title">Select a Font file</h1>
      </div>
      <div class="body">
        <nav class="crumbs">
          <button class="raised pressed toggle" aria-label="Type a file name">${icon(svg`<ellipse cx="11" cy="15" rx="6" ry="1" fill="#b9b7b3"/><path d="m2 11 8-7.500 3.500 3L5 14z" fill="#3b3b3b" stroke="#1c1c1c" stroke-width=".7"/><path d="m10 3.500 2.500-2.300q2-.7 3 1.500T13.500 6.500z" fill="#e3a3c6" stroke="#7c4a66" stroke-width=".7"/><path d="M2 11 .8 15.300 5 14z" fill="#ead96f" stroke="#7d7020" stroke-width=".7"/>`, 17, 17)}</button>
          <button class="raised back" aria-label="Back">${icon(svg`<path d="M6 0v8L1 4z" fill="#6f6d6b"/>`, 8, 8)}</button>
          ${CRUMBS.map((c, i) => html`<button class=${classMap({ raised: true, home: i === 0, here: i === 4, pressed: i === 4 })}>${i === 0 ? icon(PLACE_ART.home, 16, 16) : nothing}${c}</button>`)}
        </nav>
        <div class="loc"><label for="loc">Location:</label>
          <input id="loc" class="field" .value=${this.location} @input=${(e: Event) => (this.location = (e.target as HTMLInputElement).value)}></div>
        <div class="lists">
          <div class="left">
            <div class="places"><div class="head">Places</div>
              ${PLACES.map((g) => html`<ul>${g.map(([a, t]) => html`<li><button>${icon(PLACE_ART[a], 16, 16)}${t}</button></li>`)}</ul>`)}
            </div>
            <div class="pm">
              <button aria-label="Add">${icon(svg`<path d="M6 1v10M1 6h10" stroke="#dad8d5" stroke-width="1.600"/>`, 12, 12)}</button>
              <button aria-label="Remove">${icon(svg`<path d="M1 6h10" stroke="#dad8d5" stroke-width="1.600"/>`, 12, 12)}</button>
            </div>
          </div>
          <div class="scroll leftscroll">${this.scrollArrow(true)}<div class="thumb">${this.grip()}</div>${this.scrollArrow(false, true)}</div>
          <div class="split">${this.grip()}</div>
          <div class="rightcol">
            <div class="files">
              <div class="sheet"><table>
                <colgroup><col><col class="csize"><col class="cmod"></colgroup>
                <thead><tr><th>Name</th><th>Size</th><th><span class="sort">Modified ${icon(svg`<path d="M0 2h9L4.500 8z" fill="#7a7876"/>`, 10, 10)}</span></th></tr></thead>
                <tbody>${FILES.map((f, i) => html`<tr class=${classMap({ alt: i % 2 === 1, sel: i === this.selected })} @click=${() => (this.selected = i)}>
                  <td><span class="cell">${f.size ? html`<span class="aa">Aa</span>` : icon(PLACE_ART.folder, 16, 16)}${f.name}</span></td>
                  <td class="size">${f.size}</td><td>${f.modified}</td></tr>`)}</tbody>
              </table></div>
              <div class="scroll">${this.scrollArrow(true)}<div class="thumb">${this.grip()}</div>${this.scrollArrow(false)}</div>
            </div>
            <span class="combo raised filter"><select aria-label="File type"><option>Fonts</option></select>${this.arrows()}</span>
          </div>
        </div>
        <div class="actions"><button class="raised">Cancel</button><button class="raised primary">Open</button></div>
      </div>
    </section>`;
  }

  render() {
    return html`${this.defs()}${this.toolbars()}
      <div class="main">
        ${this.dock()}
        <main class="center">
          <div class="view">${this.scene()}${this.dialog()}</div>
          <div class="docs"><div class="doc">
            ${icon(svg`<path d="M1 1h9v4H5v2.500h4V11H5v4H1z" fill="#e23b1a" stroke="#a32a10" stroke-width=".6"/><circle cx="10.500" cy="10.500" r="3.600" fill="none" stroke="#1f3f96" stroke-width="2.600"/><circle cx="10.500" cy="10.500" r="5.200" fill="none" stroke="#1f3f96" stroke-width="1.600" stroke-dasharray="2.100 2"/>`, 16, 16)}
            <span>F2-T18-ejemplo-ini : 1</span>
            <button aria-label="Close document">${icon(svg`<path d="m2 2 8 8m0-8-8 8" stroke="#5c5c5a" stroke-width="3.800"/>`, 12, 12)}</button>
          </div></div>
        </main>
        <div class="snaps">${this.grip(true)}
          ${SNAPS.map((s) => html`<button class=${classMap({ raised: true, snap: true, pressed: !!s.on })} aria-label=${s.name} aria-pressed=${s.on ? "true" : "false"}>${icon(s.art, 16, 16)}</button>`)}
        </div>
      </div>
      <footer class="status">165.87 x 96.04 mm</footer>
      <div class="fade"></div>`;
  }
}
